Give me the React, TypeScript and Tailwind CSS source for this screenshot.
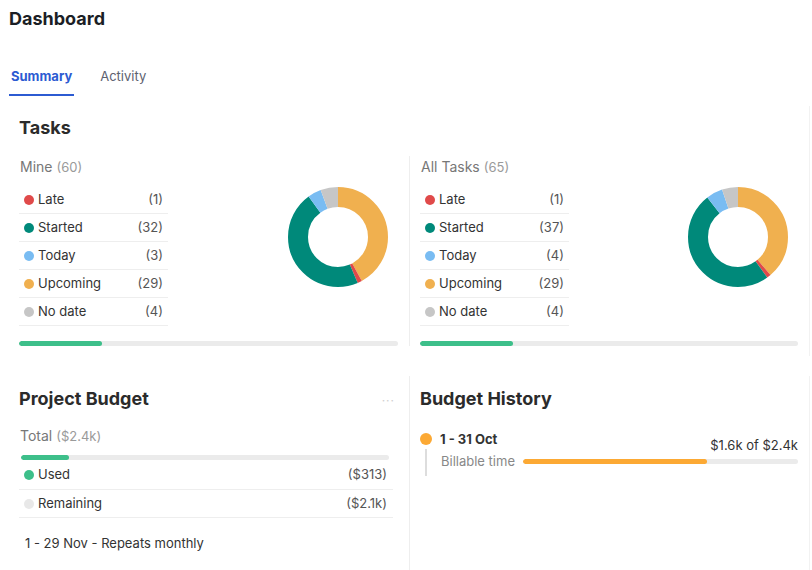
import React from "react";

type Slice = { label: string; count: number; color: string };

const order = ["Upcoming", "Late", "Started", "Today", "No date"];

const Donut = ({ slices }: { slices: Slice[] }) => {
  const total = slices.reduce((s, x) => s + x.count, 0);
  const r = 40;
  const c = 2 * Math.PI * r;
  let offset = 0;
  const sorted = order.map((o) => slices.find((s) => s.label === o)!);
  return (
    <svg width="100" height="100" viewBox="0 0 100 100" className="shrink-0">
      <g transform="rotate(-90 50 50)">
        {sorted.map((s) => {
          const len = (s.count / total) * c;
          const el = (
            <circle
              key={s.label}
              cx="50"
              cy="50"
              r={r}
              fill="none"
              stroke={s.color}
              strokeWidth="20"
              strokeDasharray={`${len} ${c - len}`}
              strokeDashoffset={-offset}
            />
          );
          offset += len;
          return el;
        })}
      </g>
    </svg>
  );
};

const mk = (late: number, started: number, today: number, up: number, nodate: number): Slice[] => [
  { label: "Late", count: late, color: "#e04a4a" },
  { label: "Started", count: started, color: "#00897a" },
  { label: "Today", count: today, color: "#79bcf2" },
  { label: "Upcoming", count: up, color: "#f0b04f" },
  { label: "No date", count: nodate, color: "#c6c6c6" },
];

const TaskHalf = ({
  title,
  total,
  slices,
  progress,
  className,
}: {
  title: string;
  total: number;
  slices: Slice[];
  progress: number;
  className: string;
}) => (
  <div className={className}>
    <div className="h-[22px] leading-[22px] pl-[1px] text-[14px] text-[#777] overflow-hidden">
      {title} <span className="text-[13px] text-[#9a9a9a]">({total})</span>
    </div>
    <div className="flex justify-between mt-[8px]">
      <div className="w-[149px]">
        {slices.map((s) => (
          <div
            key={s.label}
            className="flex items-center justify-between h-[28px] border-b border-[#eeeeee] pl-[5px] pr-[5px] text-[13px]"
          >
            <div className="flex items-center gap-[4px] text-[#333]">
              <span className="w-[10px] h-[10px] rounded-full" style={{ backgroundColor: s.color }} />
              {s.label}
            </div>
            <span className="text-[#555]">({s.count})</span>
          </div>
        ))}
      </div>
      <div className="mt-[1px] mr-[10px]">
        <Donut slices={slices} />
      </div>
    </div>
    <div className="mt-[15px] h-[5px] rounded-full bg-[#ebebeb] overflow-hidden">
      <div className="h-full rounded-full bg-[#3dbf8a]" style={{ width: `${progress}%` }} />
    </div>
  </div>
);

export default function App() {
  return (
    <div className="w-[812px] h-[570px] bg-white overflow-hidden font-['Inter',sans-serif]">
      <div className="px-[9px] pt-[7px]">
        <h1 className="text-[18px] leading-[24px] font-bold text-[#1b1e25]">Dashboard</h1>
        <div className="flex gap-[26px] mt-[35px]">
          <div className="px-[2px] pb-[8px] border-b-2 border-[#2c5bd2] text-[13px] font-bold text-[#2c5bd2] leading-[20px]">
            Summary
          </div>
          <div className="pb-[8px] text-[13px] text-[#5d6170] leading-[20px]">Activity</div>
        </div>
      </div>

      {/* Tasks */}
      <div className="mt-[10px] w-[810px] border-r border-[#f2f2f2]">
        <h2 className="pl-[19px] pt-[10px] text-[18px] leading-[24px] font-bold text-[#2b2b2b]">Tasks</h2>
        <div className="flex mt-[16px] pb-[10px]">
          <TaskHalf
            title="Mine"
            total={60}
            slices={mk(1, 32, 3, 29, 4)}
            progress={22}
            className="w-[409px] pl-[19px] pr-[11px]"
          />
          <TaskHalf
            title="All Tasks"
            total={65}
            slices={mk(1, 37, 4, 29, 4)}
            progress={24.5}
            className="w-[400px] border-l border-[#eeeeee] pl-[10px] pr-[11px]"
          />
        </div>
      </div>

      {/* Budget */}
      <div className="mt-[20px] w-[810px] flex border-r border-[#f2f2f2] h-[205px]">
        <div className="w-[409px] pl-[19px] pr-[16px] pt-[11px]">
          <div className="flex items-center justify-between">
            <h2 className="text-[18px] leading-[24px] font-bold text-[#2b2b2b]">Project Budget</h2>
            <span className="text-[#cfcfcf] text-[12px] tracking-[1px] mt-[4px] mr-[-2px]">···</span>
          </div>
          <div className="mt-[15px] h-[20px] leading-[20px] pl-[1px] text-[14px] text-[#777] overflow-hidden">
            Total <span className="text-[13px] text-[#9a9a9a]">($2.4k)</span>
          </div>
          <div className="mt-[9px] mb-[1px] ml-[2px] mr-[4px] h-[5px] rounded-full bg-[#ebebeb] overflow-hidden">
            <div className="h-full w-[13%] rounded-full bg-[#3dbf8a]" />
          </div>
          <div className="flex items-center justify-between h-[29px] border-b border-[#eeeeee] pl-[5px] pr-[6px] text-[13px]">
            <div className="flex items-center gap-[4px] text-[#333]">
              <span className="w-[10px] h-[10px] rounded-full bg-[#3dbf8a]" />
              Used
            </div>
            <span className="text-[#555]">($313)</span>
          </div>
          <div className="flex items-center justify-between h-[28px] border-b border-[#eeeeee] pl-[5px] pr-[6px] text-[13px]">
            <div className="flex items-center gap-[4px] text-[#333]">
              <span className="w-[10px] h-[10px] rounded-full bg-[#e8e8e8]" />
              Remaining
            </div>
            <span className="text-[#555]">($2.1k)</span>
          </div>
          <div className="mt-[15px] pl-[6px] text-[13px] leading-[20px] text-[#333]">1 - 29 Nov - Repeats monthly</div>
        </div>

        <div className="w-[400px] border-l border-[#eeeeee] pl-[10px] pr-[11px] pt-[11px]">
          <h2 className="text-[18px] leading-[24px] font-bold text-[#2b2b2b]">Budget History</h2>
          <div className="flex mt-[22px]">
            <div className="flex flex-col items-center w-[12px] shrink-0">
              <span className="w-[12px] h-[12px] rounded-full bg-[#fca934]" />
              <span className="w-[2px] h-[27px] mt-[4px] bg-[#dddddd]" />
            </div>
            <div className="flex-1 ml-[8px]">
              <div className="flex items-start justify-between">
                <span className="text-[13px] font-bold text-[#333] leading-[18px] -mt-[3px]">1 - 31 Oct</span>
                <span className="text-[13px] text-[#333] leading-[18px] mt-[3px]">$1.6k of $2.4k</span>
              </div>
              <div className="flex items-center -mt-[2px]">
                <span className="text-[13px] text-[#888] leading-[18px] w-[83px] pl-[1px]">Billable time</span>
                <div className="flex-1 h-[5px] rounded-full bg-[#ebebeb] overflow-hidden">
                  <div className="h-full w-[67%] rounded-full bg-[#fca934]" />
                </div>
              </div>
            </div>
          </div>
        </div>
      </div>
    </div>
  );
}
